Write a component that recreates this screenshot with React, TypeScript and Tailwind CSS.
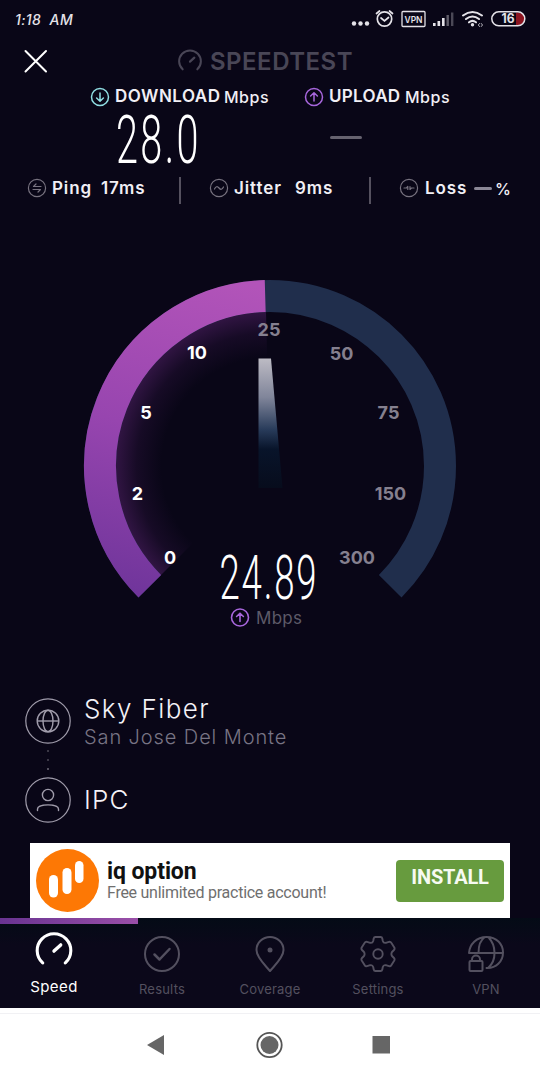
import React from 'react';

const SpeedtestIcon = ({ className, strokeWidth = 2 }: { className?: string; strokeWidth?: number }) => (
  <svg viewBox="0 0 36 32" fill="none" stroke="currentColor" strokeWidth={strokeWidth} strokeLinecap="round" className={className}>
    <path d="M7 30A16.3 16.3 0 1 1 29 30" />
    <path d="M18 18.5L24.5 12.5" strokeWidth={strokeWidth * 1.1} />
  </svg>
);

const ArrowCircle = ({ className, up }: { className?: string; up?: boolean }) => (
  <svg viewBox="0 0 20 20" fill="none" stroke="currentColor" strokeWidth="1.5" strokeLinecap="round" strokeLinejoin="round" className={className}>
    <circle cx="10" cy="10" r="8.5" />
    <path d={up ? 'M10 14V6M6.6 9L10 5.7L13.4 9' : 'M10 6V14M6.6 11L10 14.3L13.4 11'} />
  </svg>
);

const StatIcon = ({ children }: { children: React.ReactNode }) => (
  <svg viewBox="0 0 20 20" fill="none" stroke="currentColor" strokeWidth="1.2" strokeLinecap="round" strokeLinejoin="round" className="size-[20px] shrink-0 text-[#77727f]">
    <circle cx="10" cy="10" r="8.6" />
    {children}
  </svg>
);

const StatusBar = () => (
  <div className="flex h-[38px] items-center justify-between pl-[15px] pr-[14px] text-[#e4e2e8]">
    <span className="text-[14px] font-medium italic tracking-[0.4px]">1:18&nbsp; AM</span>
    <svg width="176" height="24" viewBox="350 7 176 24" fill="none" stroke="currentColor" strokeWidth="1.7" strokeLinecap="round">
      <g fill="currentColor" stroke="none">
        <circle cx="354" cy="23.5" r="2.2" />
        <circle cx="360.5" cy="23.5" r="2.2" />
        <circle cx="367" cy="23.5" r="2.2" />
      </g>
      <circle cx="384.5" cy="19" r="7.2" />
      <path d="M381 18L384.5 21L388.5 17.5M376.5 13.5L379.5 11M392.5 13.5L389.5 11" />
      <rect x="402" y="11.5" width="23" height="15" rx="1" strokeWidth="1.3" />
      <text x="404.5" y="22.5" fill="currentColor" stroke="none" fontSize="9.5" fontWeight="600" textLength="18" lengthAdjust="spacingAndGlyphs">VPN</text>
      <g stroke="none" fill="currentColor">
        <rect x="433" y="23" width="2.6" height="3" />
        <rect x="437.5" y="21" width="2.6" height="5" />
        <rect x="442" y="18" width="2.6" height="8" />
        <rect x="446.500" y="15" width="2.4" height="11" opacity=".4" />
        <rect x="451" y="12.5" width="2.4" height="13.5" opacity=".3" />
      </g>
      <path d="M463 15.5Q472.5 8.5 482 15.5M466 19Q472.5 14 479 19M469 22.3Q472.5 19.5 476 22.3" strokeWidth="2.1" />
      <circle cx="472.5" cy="24.7" r="1.7" fill="currentColor" stroke="none" />
      <path d="M479.5 23.5L478.3 25L479.5 26.5M481.3 23.5L482.5 25L481.3 26.5" strokeWidth=".8" />
      <path d="M516 12.5H518A6.3 6.3 0 0 1 518 25.200H516Z" fill="#8c1420" stroke="none" />
      <rect x="491.8" y="11.8" width="33" height="14" rx="7" strokeWidth="1.5" />
      <text x="501.500" y="23.300" fill="currentColor" stroke="none" fontSize="12.5" fontWeight="700" textLength="13" lengthAdjust="spacingAndGlyphs">16</text>
    </svg>
  </div>
);

const Header = () => (
  <header className="grid h-[46px] grid-cols-[178px_1fr] items-center">
    <button className="pl-[24px]" aria-label="Close">
      <svg width="24" height="24" viewBox="0 0 24 24" fill="none" stroke="#fff" strokeWidth="2" strokeLinecap="round">
        <path d="M1.5 2L22 22.5M22 2L1.5 22.5" />
      </svg>
    </button>
    <div className="flex items-center text-[#494656]">
      <SpeedtestIcon className="mb-[2px] h-[22px] w-[24px]" strokeWidth={3} />
      <span className="ml-[8px] mt-[2px] text-[24px] font-semibold leading-none tracking-[0.5px]">SPEEDTEST</span>
    </div>
  </header>
);

const Stats = () => (
  <section className="text-[#f1eff5]">
    <div className="grid h-[22px] grid-cols-[214px_1fr] items-center pl-[90px] text-[16px] font-semibold">
      <div className="flex items-center whitespace-nowrap">
        <ArrowCircle className="size-[20px] text-[#8fdde2]" />
        <span className="ml-[5px] w-[109px] text-[17px] tracking-[0.5px]">DOWNLOAD</span>
        <span className="font-medium tracking-[0.5px]">Mbps</span>
      </div>
      <div className="flex items-center whitespace-nowrap">
        <ArrowCircle up className="size-[20px] text-[#a766dc]" />
        <span className="ml-[5px] w-[76px] text-[17px] tracking-[0.3px]">UPLOAD</span>
        <span className="font-medium tracking-[0.5px]">Mbps</span>
      </div>
    </div>

    <div className="grid h-[66px] grid-cols-[214px_1fr] items-center pl-[116px] pr-[20px]">
      <span className="mt-[2px] origin-left scale-x-[0.6] font-[Roboto] text-[66px] font-light leading-none tracking-[4px] text-white">28.0</span>
      <span className="mb-[6px] h-[3px] w-[32px] rounded-full bg-[#66626f]" />
    </div>

    <div className="grid h-[32px] grid-cols-[152px_30px_160px_30px_1fr] items-center whitespace-nowrap pl-[27px] text-[17px] font-semibold tracking-[0.9px]">
      <div className="flex items-center">
        <StatIcon>
          <path d="M14 8.5H6.5L9 6M6 11.5H13.5L11 14" />
        </StatIcon>
        <span className="ml-[5px] mt-[2px] w-[49px]">Ping</span>
        <span className="mt-[2px]">17ms</span>
      </div>
      <span className="h-[27px] w-[1.5px] translate-y-[2px] bg-[#55515f]" />
      <div className="flex items-center">
        <StatIcon>
          <path d="M5.5 11Q7.5 7 10 10T14.5 9" />
        </StatIcon>
        <span className="ml-[5px] mt-[2px] w-[61px]">Jitter</span>
        <span className="mt-[2px]">9ms</span>
      </div>
      <span className="h-[27px] w-[1.5px] translate-y-[2px] bg-[#55515f]" />
      <div className="flex items-center">
        <StatIcon>
          <path d="M5 10H7.5L8.8 8.5V11.5M11 8.5V11.5L12.5 10H15" />
        </StatIcon>
        <span className="ml-[6px] mt-[2px] w-[49px]">Loss</span>
        <span className="h-[3px] w-[18px] rounded-full bg-[#8b8796]" />
        <span className="ml-[3px] mt-[2px] text-[16px] font-medium">%</span>
      </div>
    </div>
  </section>
);

const TICKS = [
  { label: '0', x: 170, y: 564, passed: true },
  { label: '2', x: 137.5, y: 499.5, passed: true },
  { label: '5', x: 146, y: 419, passed: true },
  { label: '10', x: 197, y: 359, passed: true },
  { label: '25', x: 269, y: 336, passed: false },
  { label: '50', x: 341.5, y: 359.5, passed: false },
  { label: '75', x: 388.5, y: 419, passed: false },
  { label: '150', x: 390.5, y: 499.5, passed: false },
  { label: '300', x: 357, y: 564, passed: false },
];

const Gauge = () => (
  <svg width="540" height="436" viewBox="0 204 540 436" className="block">
    <defs>
      <linearGradient id="progress" gradientUnits="userSpaceOnUse" x1="230" y1="280" x2="150" y2="597">
        <stop offset="0" stopColor="#b254b9" />
        <stop offset="0.5" stopColor="#9745af" />
        <stop offset="1" stopColor="#70359b" />
      </linearGradient>
      <linearGradient id="needle" x1="0" y1="0" x2="0" y2="1">
        <stop offset="0" stopColor="#bdbbc4" />
        <stop offset="0.3" stopColor="#80859a" />
        <stop offset="0.55" stopColor="#283b5a" />
        <stop offset="0.7" stopColor="#08142a" />
        <stop offset="1" stopColor="#070c1c" />
      </linearGradient>
      <radialGradient id="glow" gradientUnits="userSpaceOnUse" cx="270" cy="466" r="155">
        <stop offset="0.7" stopColor="#7a2f93" stopOpacity="0" />
        <stop offset="0.86" stopColor="#7a2f93" stopOpacity="0.12" />
        <stop offset="1" stopColor="#7a2f93" stopOpacity="0.36" />
      </radialGradient>
    </defs>
    <path d="M270 466L161 575A154 154 0 0 1 266 312Z" fill="url(#glow)" />
    <path d="M149.8 586.2A170 170 0 1 1 390.2 586.2" fill="none" stroke="#202e4c" strokeWidth="32" />
    <path d="M149.8 586.2A170 170 0 0 1 265.2 296.07" fill="none" stroke="url(#progress)" strokeWidth="32" />
    <path d="M258.5 358.5H271L282.5 488H258.5Z" fill="url(#needle)" />
    {TICKS.map((tick) => (
      <text key={tick.label} x={tick.x} y={tick.y} textAnchor="middle" fontSize="18" fontWeight="700" fill={tick.passed ? '#ffffff' : '#85808f'}>
        {tick.label}
      </text>
    ))}
    <text transform="translate(219.5 599) scale(0.6 1)" fontFamily="Roboto" fontSize="61" fontWeight="300" letterSpacing="3" fill="#fff">24.89</text>
    <g fill="none" stroke="#a766dc" strokeWidth="1.6" strokeLinecap="round" strokeLinejoin="round">
      <circle cx="240" cy="617.5" r="8.5" />
      <path d="M240 621.5V613.5M236.6 616.5L240 613.2L243.4 616.5" />
    </g>
    <text x="256" y="623.5" fontSize="17" fill="#5d5a68" textLength="46">Mbps</text>
  </svg>
);

const Connection = () => (
  <section className="grid h-[203px] grid-cols-[46px_1fr] gap-x-[13px] pl-[25px] pt-[58px] font-light">
    <div className="-mt-[0.5px] flex flex-col items-center text-[#a09cab]">
      <svg width="46" height="46" viewBox="0 0 46 46" fill="none" stroke="currentColor" strokeWidth="1.4">
        <circle cx="23" cy="23" r="22.2" strokeWidth="1.2" />
        <circle cx="23" cy="23" r="10.8" />
        <ellipse cx="23" cy="23" rx="5" ry="10.8" />
        <path d="M12.2 23H33.8" />
      </svg>
      <div className="flex h-[33px] flex-col items-center justify-center gap-[7px]">
        <span className="size-[2px] rounded-full bg-[#4b4856]" />
        <span className="size-[2px] rounded-full bg-[#4b4856]" />
        <span className="size-[2px] rounded-full bg-[#6b6876]" />
      </div>
      <svg width="46" height="46" viewBox="0 0 46 46" fill="none" stroke="currentColor" strokeWidth="1.4" strokeLinecap="round">
        <circle cx="23" cy="23" r="22.2" strokeWidth="1.2" />
        <circle cx="23" cy="18" r="5.6" />
        <path d="M12.5 33.5V32C12.5 26.5 33.5 26.5 33.5 32V33.5" />
      </svg>
    </div>
    <div className="flex flex-col whitespace-nowrap">
      <span className="h-[27px] text-[26px] leading-[22px] tracking-[1.4px] text-[#f4f2f7]">Sky Fiber</span>
      <span className="h-[49px] text-[20px] leading-[25px] tracking-[0.9px] text-[#787484]">San Jose Del Monte</span>
      <span className="text-[26px] leading-[51px] tracking-[1.2px] text-[#f4f2f7]">IPC</span>
    </div>
  </section>
);

const AdBanner = () => (
  <section className="mx-[30px] flex h-[75px] items-center bg-white pl-[6px] pr-[6px] font-[Roboto]">
    <svg width="63" height="63" viewBox="0 0 63 63" className="shrink-0">
      <circle cx="31.5" cy="31.5" r="31.5" fill="#fd7805" />
      <g fill="#fff">
        <rect x="13" y="26" width="9" height="22.5" rx="4.5" />
        <rect x="26.5" y="19" width="9" height="26" rx="4.5" />
        <rect x="39" y="12" width="8.5" height="22" rx="4.25" />
      </g>
    </svg>
    <div className="ml-[8px] flex flex-1 flex-col whitespace-nowrap">
      <span className="text-[23px] font-bold leading-[23px] tracking-[-0.1px] text-[#111]">iq option</span>
      <span className="text-[16px] leading-[19px] tracking-[-0.26px] text-[#6f6f6f]">Free unlimited practice account!</span>
    </div>
    <button className="h-[42px] w-[108px] rounded-[4px] bg-[#679b3e] pb-[7px] text-[20px] font-bold leading-none tracking-[-0.2px] text-[#f6faf2]">INSTALL</button>
  </section>
);

const TabBar = () => (
  <nav className="h-[90px] bg-gradient-to-b from-[#040b16] to-[#0b081a] to-30%">
    <div className="h-[6px] w-[138px] bg-gradient-to-r from-[#693391] to-[#9a4fa8]" />
    <div className="grid h-[84px] grid-cols-5 text-center text-[13px] tracking-[0.2px] text-[#53505f]">
      <div className="flex flex-col items-center pt-[8px] text-white">
        <SpeedtestIcon className="h-[33px] w-[38px]" strokeWidth={3} />
        <span className="mt-[12px] text-[15px] leading-[20px] tracking-[0.4px]">Speed</span>
      </div>
      <div className="flex flex-col items-center pt-[12px]">
        <svg width="36" height="36" viewBox="0 0 36 36" fill="none" stroke="currentColor" strokeWidth="2" strokeLinecap="round" strokeLinejoin="round">
          <circle cx="18" cy="18" r="17" />
          <path d="M10.5 18.5L15.5 23.5L25.5 13" strokeWidth="2.5" />
        </svg>
        <span className="mt-[8px] leading-[18px]">Results</span>
      </div>
      <div className="flex flex-col items-center pt-[12px]">
        <svg width="36" height="36" viewBox="0 0 36 36" fill="none" stroke="currentColor" strokeWidth="2" strokeLinejoin="round">
          <path d="M18 35C13 29 4.5 21.5 4.5 14A13.5 13 0 0 1 31.5 14C31.5 21.5 23 29 18 35Z" />
          <circle cx="18" cy="14" r="2.5" fill="currentColor" stroke="none" />
        </svg>
        <span className="mt-[8px] leading-[18px]">Coverage</span>
      </div>
      <div className="flex flex-col items-center pt-[12px]">
        <svg width="36" height="36" viewBox="0 0 36 36" fill="none" stroke="currentColor" strokeWidth="1.9" strokeLinejoin="round">
          <path d="M15.500 1H20.500Q22 1 22.300 2.500L22.800 5Q23.500 7.300 25.800 6.800L29 5.800Q30.500 5.400 31.300 6.800L34.300 11.500Q35 13 34 14L32 16Q30.800 18 32 20L34 22Q35 23 34.300 24.500L31.300 29.200Q30.500 30.600 29 30.200L25.800 29.200Q23.500 28.700 22.800 31L22.300 33.500Q22 35 20.500 35H15.500Q14 35 13.700 33.500L13.200 31Q12.500 28.700 10.200 29.200L7 30.200Q5.500 30.600 4.700 29.200L1.700 24.500Q1 23 2 22L4 20Q5.200 18 4 16L2 14Q1 13 1.700 11.500L4.700 6.800Q5.500 5.400 7 5.800L10.200 6.800Q12.500 7.300 13.200 5L13.700 2.500Q14 1 15.500 1Z" />
          <circle cx="18" cy="18" r="4.7" />
        </svg>
        <span className="mt-[8px] leading-[18px]">Settings</span>
      </div>
      <div className="flex flex-col items-center pt-[12px]">
        <svg width="36" height="36" viewBox="0 0 36 36" fill="none" stroke="currentColor" strokeWidth="2" strokeLinecap="round">
          <path d="M1 17C1.500 8.500 8.500 1 18.500 1C28.500 1 35 8 35 16.500C35 25.500 28 32.500 18.500 32M1 17H35M16.500 1.500C11 5 10.500 11 10.500 17M20.500 1.500C28 9 29 24 20.500 31.500" />
          <rect x="1.500" y="25" width="13" height="10" rx="1" />
          <path d="M4 25V23.500A4 4 0 0 1 12 23.500V25" />
        </svg>
        <span className="mt-[8px] leading-[18px]">VPN</span>
      </div>
    </div>
  </nav>
);

const AndroidNav = () => (
  <footer className="h-[72px] bg-white pt-[5px]">
    <div className="flex h-[67px] items-center justify-center border-t border-[#f1f1f4] pb-[5px]">
      <svg width="250" height="30" viewBox="0 0 250 30" fill="#666">
        <path d="M2 15L19 5V25Z" />
        <circle cx="124.5" cy="15" r="12.2" fill="none" stroke="#555" strokeWidth="1.8" />
        <circle cx="124.5" cy="15" r="9" />
        <rect x="227.5" y="6" width="17.5" height="17.5" />
      </svg>
    </div>
  </footer>
);

export default function App() {
  return (
    <div className="h-[1080px] w-[540px] overflow-hidden bg-[#090617] font-[Inter,sans-serif]">
      <StatusBar />
      <Header />
      <Stats />
      <Gauge />
      <Connection />
      <AdBanner />
      <TabBar />
      <AndroidNav />
    </div>
  );
}
